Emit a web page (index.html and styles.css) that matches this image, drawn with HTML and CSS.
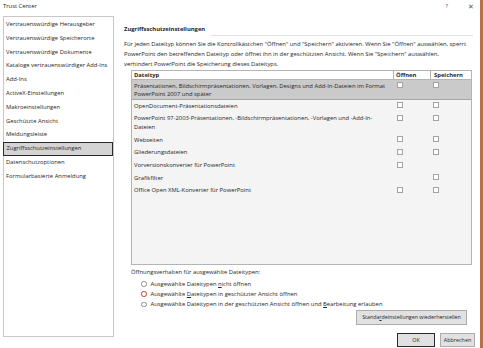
FILE: index.html
```html
<!DOCTYPE html>
<html lang="de">
<head>
<meta charset="utf-8">
<title>Trust Center</title>
<link rel="stylesheet" href="styles.css">
</head>
<body>
<div class="dialog">
  <div class="titlebar">
    <span class="title">Trust Center</span>
    <span class="ctrl help">?</span>
    <span class="ctrl close">✕</span>
  </div>
  <div class="main">
    <nav class="nav">
      <div class="nav-item">Vertrauenswürdige Herausgeber</div>
      <div class="nav-item">Vertrauenswürdige Speicherorte</div>
      <div class="nav-item">Vertrauenswürdige Dokumente</div>
      <div class="nav-item">Kataloge vertrauenswürdiger Add-Ins</div>
      <div class="nav-item">Add-Ins</div>
      <div class="nav-item">ActiveX-Einstellungen</div>
      <div class="nav-item">Makroeinstellungen</div>
      <div class="nav-item">Geschützte Ansicht</div>
      <div class="nav-item">Meldungsleiste</div>
      <div class="nav-item selected">Zugriffsschutzeinstellungen</div>
      <div class="nav-item">Datenschutzoptionen</div>
      <div class="nav-item">Formularbasierte Anmeldung</div>
    </nav>
    <section class="content">
      <div class="heading"><span class="heading-text">Zugriffsschutzeinstellungen</span><span class="heading-line"></span></div>
      <p class="intro">Für jeden Dateityp können Sie die Kontrollkästchen "Öffnen" und "Speichern" aktivieren. Wenn Sie "Öffnen" auswählen, sperrt<br>PowerPoint den betreffenden Dateityp oder öffnet ihn in der geschützten Ansicht. Wenn Sie "Speichern" auswählen,<br>verhindert PowerPoint die Speicherung dieses Dateityps.</p>
      <div class="table">
        <div class="row head">
          <div class="cell">Dateityp</div>
          <div class="cell">Öffnen</div>
          <div class="cell">Speichern</div>
        </div>
        <div class="row sel">
          <div class="cell">Präsentationen, Bildschirmpräsentationen, Vorlagen, Designs und Add-In-Dateien im Format<br>PowerPoint 2007 und später</div>
          <div class="cell"><span class="cb"></span></div>
          <div class="cell"><span class="cb"></span></div>
        </div>
        <div class="row">
          <div class="cell">OpenDocument-Präsentationsdateien</div>
          <div class="cell"><span class="cb"></span></div>
          <div class="cell"><span class="cb"></span></div>
        </div>
        <div class="row">
          <div class="cell">PowerPoint 97-2003-Präsentationen, -Bildschirmpräsentationen, -Vorlagen und -Add-In-<br>Dateien</div>
          <div class="cell"><span class="cb"></span></div>
          <div class="cell"><span class="cb"></span></div>
        </div>
        <div class="row">
          <div class="cell">Webseiten</div>
          <div class="cell"><span class="cb"></span></div>
          <div class="cell"><span class="cb"></span></div>
        </div>
        <div class="row">
          <div class="cell">Gliederungsdateien</div>
          <div class="cell"><span class="cb"></span></div>
          <div class="cell"><span class="cb"></span></div>
        </div>
        <div class="row">
          <div class="cell">Vorversionskonverter für PowerPoint</div>
          <div class="cell"><span class="cb"></span></div>
          <div class="cell"></div>
        </div>
        <div class="row">
          <div class="cell">Grafikfilter</div>
          <div class="cell"></div>
          <div class="cell"><span class="cb"></span></div>
        </div>
        <div class="row">
          <div class="cell">Office Open XML-Konverter für PowerPoint</div>
          <div class="cell"><span class="cb"></span></div>
          <div class="cell"><span class="cb"></span></div>
        </div>
      </div>
      <div class="label">Öffnungsverhalten für ausgewählte Dateitypen:</div>
      <div class="radios">
        <div class="radio"><span class="rb"></span><span class="rt">Ausgewählte Dateitypen <u>n</u>icht öffnen</span></div>
        <div class="radio"><span class="rb on"></span><span class="rt">Ausgewählte <u>D</u>ateitypen in geschützter Ansicht öffnen</span></div>
        <div class="radio"><span class="rb"></span><span class="rt">Ausgewählte Dateitypen in der geschützten Ansicht öffnen und <u>B</u>earbeitung erlauben</span></div>
      </div>
      <div class="reset-row"><button class="btn reset">Standa<u>r</u>deinstellungen wiederherstellen</button></div>
      <div class="footer">
        <button class="btn ok">OK</button>
        <button class="btn cancel">Abbrechen</button>
      </div>
    </section>
  </div>
</div>
<div class="edge"></div>
</body>
</html>
```
FILE: styles.css
```css
* { box-sizing: border-box; }
html, body { margin: 0; padding: 0; }
body {
  width: 483px;
  height: 348px;
  overflow: hidden;
  display: flex;
  background: #fff;
  font-family: "Open Sans", "Noto Sans", sans-serif;
  font-size: 5.85px;
  color: #262626;
}
.dialog {
  flex: 1;
  display: flex;
  flex-direction: column;
  background: #fff;
}
.edge {
  width: 3px;
  background: #b8704a;
}
.titlebar {
  height: 16px;
  display: flex;
  align-items: flex-start;
  padding-top: 1.5px;
  line-height: 9px;
}
.title { margin-left: 3px; flex: 1; }
.ctrl { color: #555; }
.help { margin-right: 20px; }
.close { margin-right: 6px; font-size: 6.5px; }
.main {
  display: flex;
  flex: 1;
}
.nav {
  margin-left: 3px;
  width: 111px;
  height: 321px;
  border: 1px solid #c8c8c8;
  padding-top: 1px;
}
.nav-item {
  height: 13.8px;
  line-height: 13.8px;
  padding-left: 2px;
  white-space: nowrap;
}
.nav-item.selected {
  background: #d4d4d4;
  border: 1.5px solid #2b2b2b;
  margin-left: -1px;
  padding-left: 2.5px;
  line-height: 10.8px;
}
.content {
  margin-left: 10px;
  width: 349px;
  padding-top: 8.5px;
  display: flex;
  flex-direction: column;
}
.heading {
  display: flex;
  align-items: flex-end;
  line-height: 9px;
  height: 9px;
}
.heading-text { font-weight: bold; white-space: nowrap; }
.heading-line {
  flex: 1;
  border-top: 1px solid #e0e0e0;
  margin-left: 6px;
  margin-bottom: -2.5px;
}
.intro {
  margin: 6.7px 0 0 0;
  line-height: 9.7px;
  white-space: nowrap;
}
.table {
  margin: 0.7px 0 0 7px;
  width: 341px;
  height: 195.5px;
  border: 1px solid #b4b4b4;
  background: #f4f4f4;
}
.row {
  display: grid;
  grid-template-columns: 261px 37px 1fr;
  line-height: 8.6px;
}
.row .cell { padding: 1.9px 0 2.2px 2px; white-space: nowrap; }
.row .cell:nth-child(2) { padding-left: 4px; }
.row .cell:nth-child(3) { padding-left: 3px; }
.row.head {
  background: #fff;
  border-bottom: 1px solid #b4b4b4;
  font-weight: bold;
}
.row.head .cell { padding-top: 0; padding-bottom: 0; height: 8.5px; line-height: 8.5px; }
.row.head .cell:nth-child(2) { padding-left: 2px; }
.row.head .cell + .cell { border-left: 1px solid #b4b4b4; }
.row.sel {
  background: #cacaca;
  border-bottom: 1px solid #a6a6a6;
}
.row.sel .cell { padding-top: 1.2px; padding-bottom: 0; }
.cb {
  display: inline-block;
  width: 6px;
  height: 6px;
  border: 1px solid #a3a3a3;
  background: #fff;
  vertical-align: -0.5px;
}
.label {
  margin: 2.7px 0 0 7px;
  line-height: 9.7px;
}
.radios { margin: 0.9px 0 0 17px; }
.radio {
  line-height: 10.3px;
  display: flex;
  align-items: center;
  white-space: nowrap;
}
.rb {
  width: 5.5px;
  height: 5.5px;
  border: 1px solid #8a8a8a;
  border-radius: 50%;
  margin-right: 4px;
  background: #fff;
  flex: none;
}
.rb.on {
  border: 1.7px solid #c43e1c;
}
.btn {
  font-family: inherit;
  font-size: 5.4px;
  color: inherit;
  background: #e1e1e1;
  border: 1px solid #adadad;
  padding: 0;
  margin: 0;
  white-space: nowrap;
}
.reset-row {
  display: flex;
  justify-content: flex-end;
  margin: 0.3px 6px 0 0;
}
.reset { width: 111px; height: 15px; font-size: 5.3px; }
.footer {
  display: flex;
  justify-content: flex-end;
  gap: 5px;
  margin: 8px -2px 0 0;
}
.ok { width: 38px; height: 14px; border: 1.5px solid #2b2b2b; }
.cancel { width: 35px; height: 14px; }
```
